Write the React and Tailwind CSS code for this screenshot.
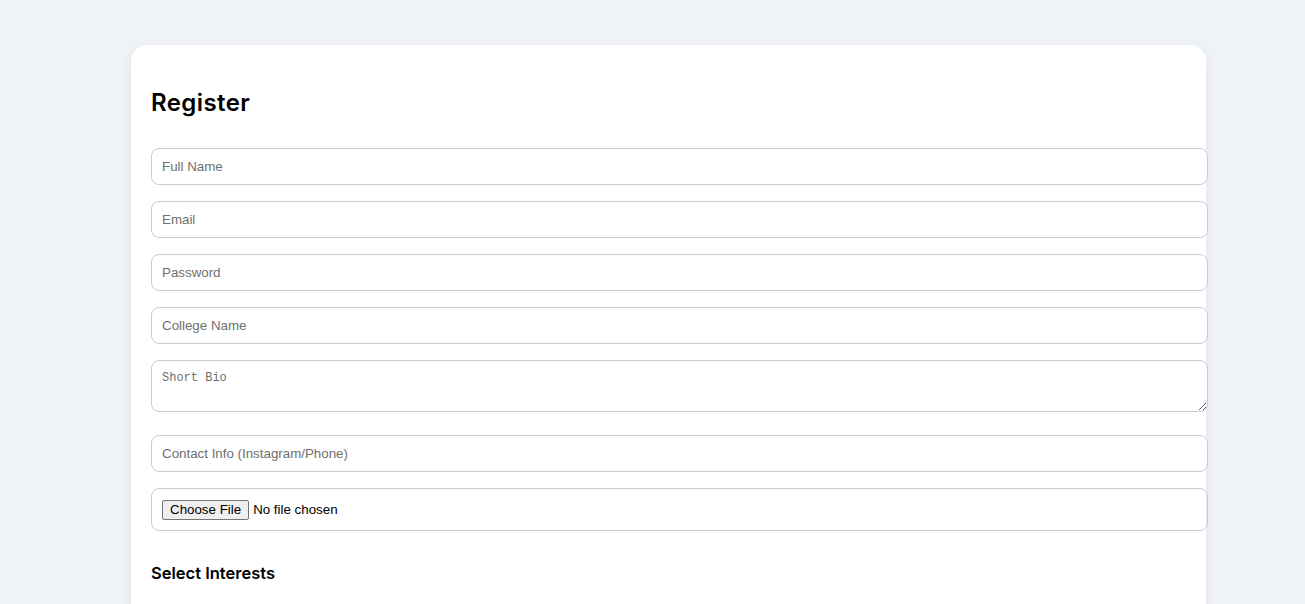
import { useState } from 'react';

const fields = [
  ['fullName', 'Full Name', 'text'],
  ['email', 'Email', 'email'],
  ['password', 'Password', 'password'],
  ['college', 'College Name', 'text'],
];

export default function App() {
  const [form, setForm] = useState({});

  const inputCls =
    'block box-content w-full h-[15px] px-[10px] py-[10px] mb-[16px] border border-[#cccccc] rounded-[8px] bg-white text-[13.33px] leading-[15px] text-black placeholder:text-[#6f6f6f] outline-none';

  return (
    <div className="min-h-screen bg-[#eff2f7] pt-[45px] pb-10 font-['Liberation_Sans',Arial,sans-serif]">
      <div className="ml-[131px] w-[1075px] bg-white rounded-[16px] px-[20px] pt-[42px] pb-10 shadow-[0_4px_14px_rgba(0,0,0,0.06)]">
        {/* Header */}
        <h2 className="font-['Inter',sans-serif] font-semibold text-[24px] leading-[32px] text-black mb-[29px] tracking-[0.4px]">
          Register
        </h2>

        <form>
          {fields.map(([name, label, type]) => (
            <input
              key={name}
              type={type}
              placeholder={label}
              value={form[name] || ''}
              onChange={(e) => setForm({ ...form, [name]: e.target.value })}
              className={inputCls}
            />
          ))}

          <textarea
            placeholder="Short Bio"
            className="block box-content w-full h-[30px] px-[10px] py-[10px] mb-[23px] border border-[#cccccc] rounded-[8px] bg-white font-['Liberation_Mono',monospace] text-[12px] leading-[15px] placeholder:text-[#6f6f6f] outline-none"
          />

          <input type="text" placeholder="Contact Info (Instagram/Phone)" className={inputCls} />

          <input
            type="file"
            className="block box-content w-full h-[21px] px-[10px] py-[10px] border border-[#cccccc] rounded-[8px] text-[13.33px] leading-[21px] text-black file:mr-[4px] file:px-[7px] file:py-[1px] file:border file:border-[#767676] file:rounded-[2px] file:bg-[#efefef] file:text-black file:text-[13.33px] file:leading-[16px]"
          />

          {/* Interests */}
          <h3 className="font-['Inter',sans-serif] font-semibold text-[16.5px] leading-[24px] text-black mt-[30px] mb-[28px]">
            Select Interests
          </h3>
        </form>
      </div>
    </div>
  );
}
